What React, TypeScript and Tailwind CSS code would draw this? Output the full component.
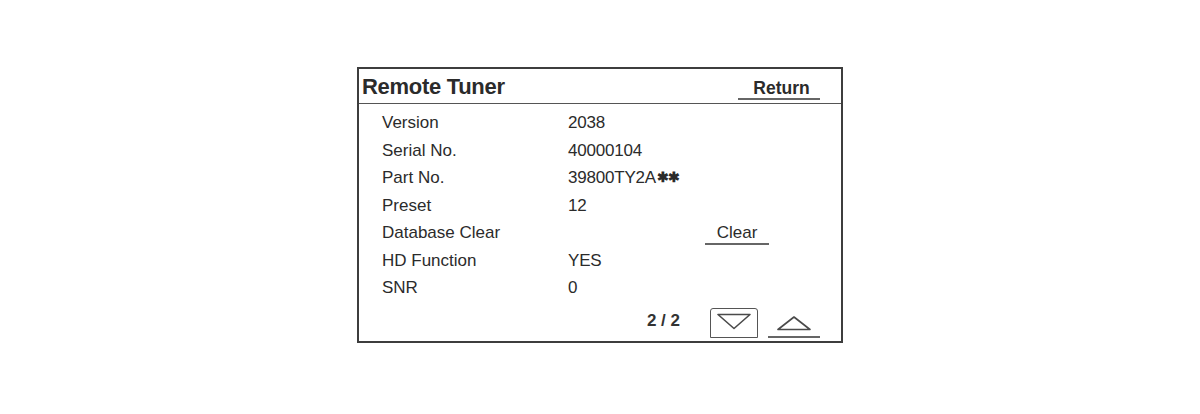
import React from 'react';

const rows = [
  { label: 'Version', value: '2038' },
  { label: 'Serial No.', value: '40000104' },
  { label: 'Part No.', value: '39800TY2A', stars: true },
  { label: 'Preset', value: '12' },
  { label: 'Database Clear', value: '', action: 'Clear' },
  { label: 'HD Function', value: 'YES' },
  { label: 'SNR', value: '0' },
];

function DownArrow() {
  return (
    <svg width="34" height="17" viewBox="0 0 34 17" fill="none">
      <path d="M1 1.5 L33 1.5 L17 15.5 Z" stroke="#4a4a4a" strokeWidth="1.6" strokeLinejoin="round" />
    </svg>
  );
}

function UpArrow() {
  return (
    <svg width="34" height="15" viewBox="0 0 34 15" fill="none">
      <path d="M1 13.5 L33 13.5 L17 1 Z" stroke="#4a4a4a" strokeWidth="1.6" strokeLinejoin="round" />
    </svg>
  );
}

export default function App() {
  return (
    <div
      className="min-h-[414px] bg-white flex justify-center pt-[67px] text-[#2b2b2b]"
      style={{ fontFamily: '"Liberation Sans", Arial, sans-serif' }}
    >
      <div className="w-[486px] h-[276px] border-2 border-[#3d3d3d] flex flex-col">
        {/* header */}
        <div className="h-[35px] flex items-center justify-between pl-[3px] pr-[21px] border-b border-[#555]">
          <span className="text-[22px] font-bold tracking-[-0.3px] leading-none mt-[2px]">Remote Tuner</span>
          <span className="w-[82px] text-center text-[17.5px] font-bold leading-[20px] border-b-2 border-[#666] self-end mb-[3px] pl-[5px]">
            Return
          </span>
        </div>

        {/* rows */}
        <div className="pt-[5px] pl-[23px] grid grid-cols-[186px_137px_64px] auto-rows-[27.5px] text-[17px]">
          {rows.map((r) => (
            <React.Fragment key={r.label}>
              <div className="flex items-center">{r.label}</div>
              <div className="flex items-center tracking-[-0.2px]">
                {r.value}
                {r.stars && <span className="text-[14px] font-bold tracking-[-1px] ml-[1px]">✱✱</span>}
              </div>
              <div className="flex items-center">
                {r.action && (
                  <span className="w-[64px] text-center leading-[20px] pt-[2px] border-b-2 border-[#666] font-medium">
                    {r.action}
                  </span>
                )}
              </div>
            </React.Fragment>
          ))}
        </div>

        {/* footer */}
        <div className="flex-1 flex items-end justify-end pr-[21px] pb-[3px]">
          <span className="text-[17px] font-bold mb-[5px] mr-[30px] text-[#333]">2 / 2</span>
          <div className="w-[48px] h-[30px] border-[1.5px] border-[#555] rounded-t-[3px] flex items-start justify-center pt-[4px] mr-[10px]">
            <DownArrow />
          </div>
          <div className="w-[52px] h-[22px] border-b-2 border-[#666] flex items-start justify-center">
            <UpArrow />
          </div>
        </div>
      </div>
    </div>
  );
}
